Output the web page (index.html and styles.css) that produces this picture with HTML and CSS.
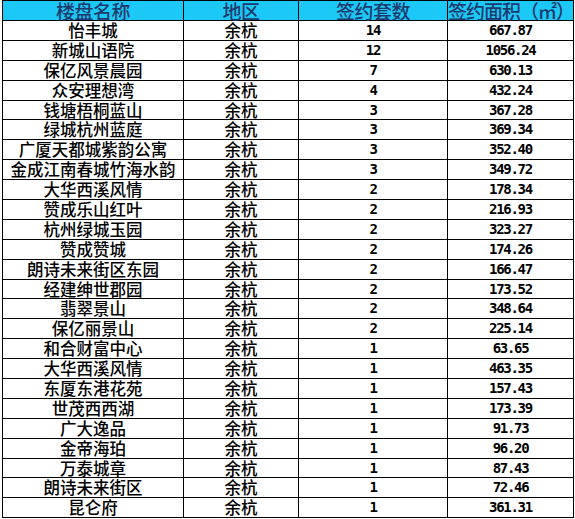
FILE: index.html
```html
<!DOCTYPE html>
<html lang="zh-CN">
<head>
<meta charset="utf-8">
<title>签约表</title>
<link rel="stylesheet" href="styles.css">
</head>
<body>
<table class="deals">
  <colgroup>
    <col class="c-name"><col class="c-area"><col class="c-count"><col class="c-size">
  </colgroup>
  <thead>
    <tr><th>楼盘名称</th><th>地区</th><th>签约套数</th><th class="wide">签约面积（㎡）</th></tr>
  </thead>
  <tbody>
    <tr><td>怡丰城</td><td>余杭</td><td class="num">14</td><td class="num">667.87</td></tr>
    <tr><td>新城山语院</td><td>余杭</td><td class="num">12</td><td class="num">1056.24</td></tr>
    <tr><td>保亿风景晨园</td><td>余杭</td><td class="num">7</td><td class="num">630.13</td></tr>
    <tr><td>众安理想湾</td><td>余杭</td><td class="num">4</td><td class="num">432.24</td></tr>
    <tr><td>钱塘梧桐蓝山</td><td>余杭</td><td class="num">3</td><td class="num">367.28</td></tr>
    <tr><td>绿城杭州蓝庭</td><td>余杭</td><td class="num">3</td><td class="num">369.34</td></tr>
    <tr><td>广厦天都城紫韵公寓</td><td>余杭</td><td class="num">3</td><td class="num">352.40</td></tr>
    <tr><td>金成江南春城竹海水韵</td><td>余杭</td><td class="num">3</td><td class="num">349.72</td></tr>
    <tr><td>大华西溪风情</td><td>余杭</td><td class="num">2</td><td class="num">178.34</td></tr>
    <tr><td>赞成乐山红叶</td><td>余杭</td><td class="num">2</td><td class="num">216.93</td></tr>
    <tr><td>杭州绿城玉园</td><td>余杭</td><td class="num">2</td><td class="num">323.27</td></tr>
    <tr><td>赞成赞城</td><td>余杭</td><td class="num">2</td><td class="num">174.26</td></tr>
    <tr><td>朗诗未来街区东园</td><td>余杭</td><td class="num">2</td><td class="num">166.47</td></tr>
    <tr><td>经建绅世郡园</td><td>余杭</td><td class="num">2</td><td class="num">173.52</td></tr>
    <tr><td>翡翠景山</td><td>余杭</td><td class="num">2</td><td class="num">348.64</td></tr>
    <tr><td>保亿丽景山</td><td>余杭</td><td class="num">2</td><td class="num">225.14</td></tr>
    <tr><td>和合财富中心</td><td>余杭</td><td class="num">1</td><td class="num">63.65</td></tr>
    <tr><td>大华西溪风情</td><td>余杭</td><td class="num">1</td><td class="num">463.35</td></tr>
    <tr><td>东厦东港花苑</td><td>余杭</td><td class="num">1</td><td class="num">157.43</td></tr>
    <tr><td>世茂西西湖</td><td>余杭</td><td class="num">1</td><td class="num">173.39</td></tr>
    <tr><td>广大逸品</td><td>余杭</td><td class="num">1</td><td class="num">91.73</td></tr>
    <tr><td>金帝海珀</td><td>余杭</td><td class="num">1</td><td class="num">96.20</td></tr>
    <tr><td>万泰城章</td><td>余杭</td><td class="num">1</td><td class="num">87.43</td></tr>
    <tr><td>朗诗未来街区</td><td>余杭</td><td class="num">1</td><td class="num">72.46</td></tr>
    <tr><td>昆仑府</td><td>余杭</td><td class="num">1</td><td class="num">361.31</td></tr>
  </tbody>
</table>
</body>
</html>
```

FILE: styles.css
```css
html, body {
  margin: 0;
  padding: 0;
  background: #ffffff;
}

body {
  padding-left: 2px;
  font-family: "Noto Sans CJK SC", "Noto Sans", sans-serif;
}

.deals {
  border-collapse: collapse;
  table-layout: fixed;
  width: 571px;
}

.c-name { width: 181px; }
.c-area { width: 115px; }
.c-count { width: 149px; }
.c-size { width: 126px; }

.deals th,
.deals td {
  border: 1px solid #000000;
  padding: 0;
  text-align: center;
  vertical-align: middle;
  white-space: nowrap;
}

.deals th {
  height: 19px;
  line-height: 18px;
  background: #1cc8f6;
  color: #1d3a6c;
  font-size: 19px;
  font-weight: 500;
  letter-spacing: -0.5px;
}

.deals th.wide {
  text-align: left;
  letter-spacing: -1px;
}

.deals td {
  height: 18.9px;
  line-height: 17px;
  color: #000000;
  font-size: 16.5px;
  font-weight: 500;
}

.deals td.num {
  font-family: "DejaVu Sans Mono", "Liberation Mono", monospace;
  font-size: 14px;
  font-weight: 700;
  letter-spacing: -1.3px;
}
```
